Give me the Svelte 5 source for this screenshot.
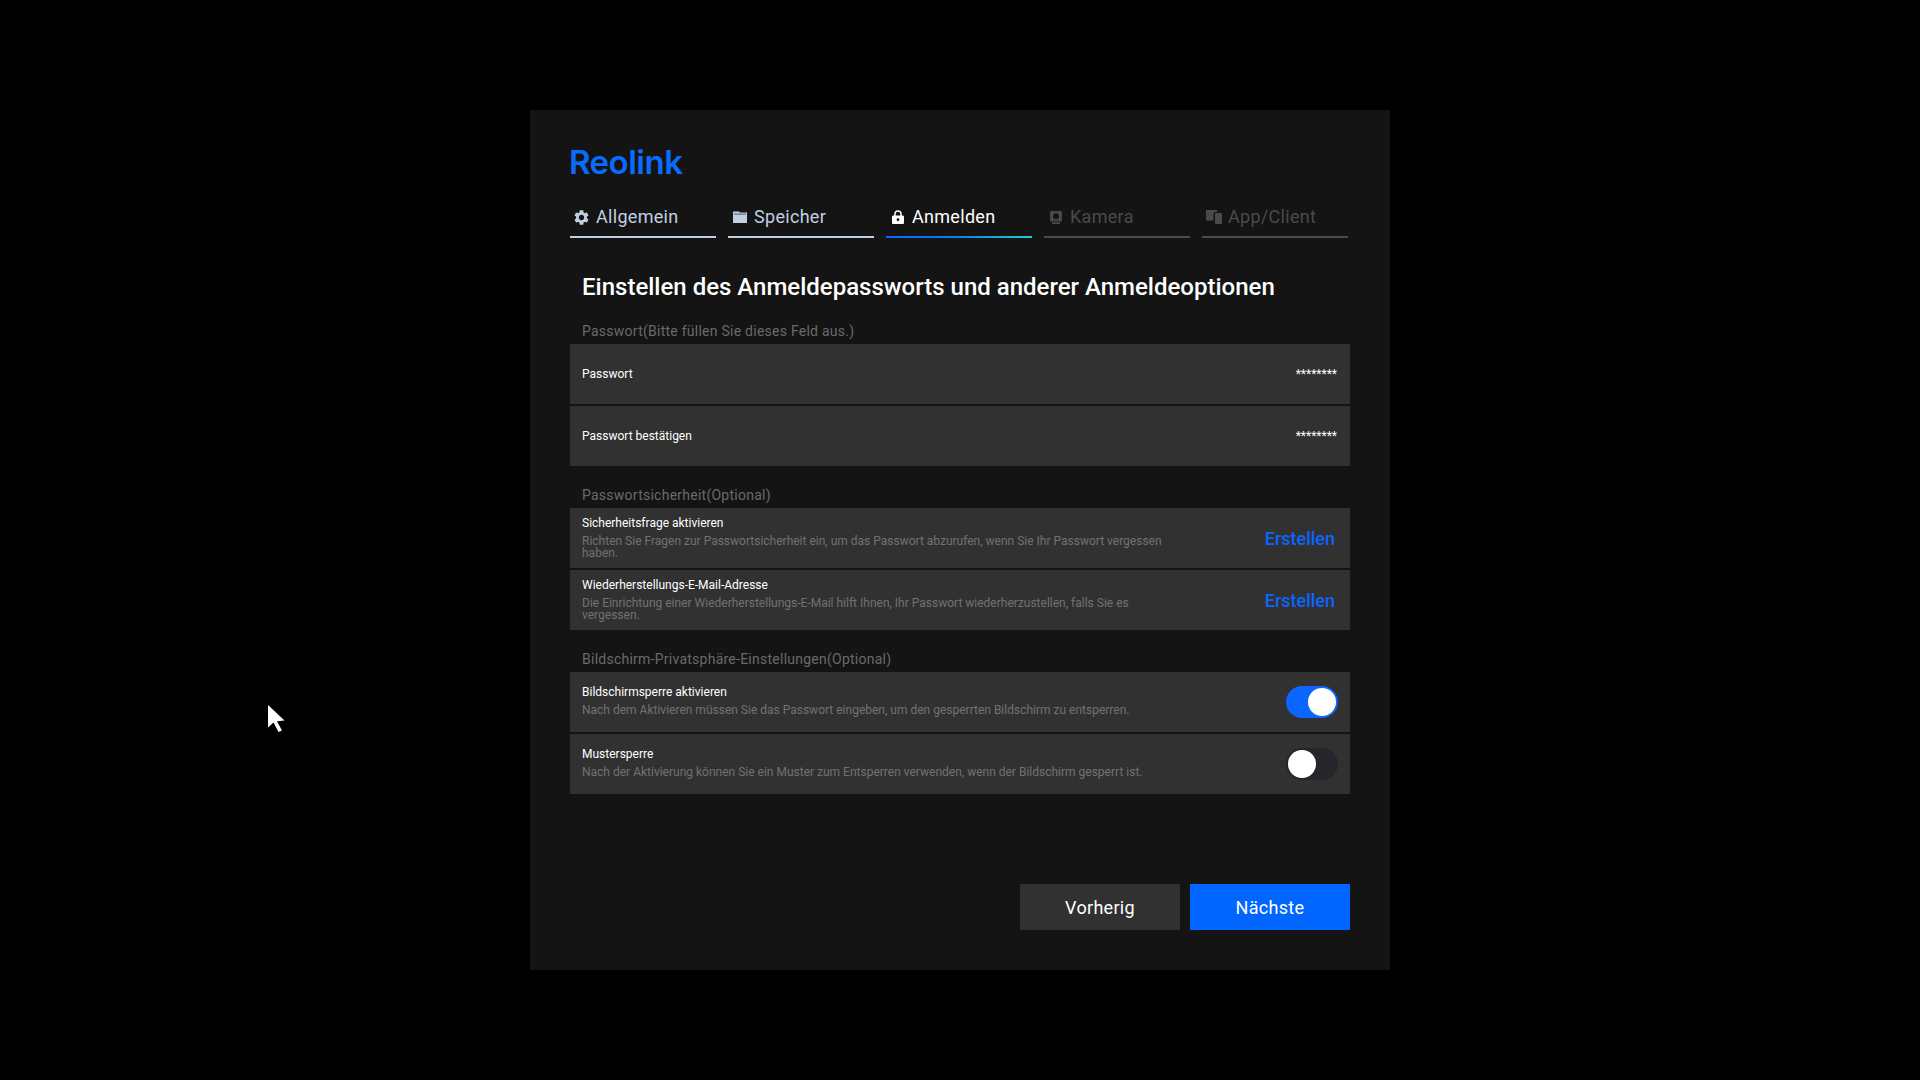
<script>
  const tabs = [
    { label: 'Allgemein', state: 'done', icon: 'gear' },
    { label: 'Speicher', state: 'done', icon: 'folder' },
    { label: 'Anmelden', state: 'active', icon: 'lock' },
    { label: 'Kamera', state: 'off', icon: 'camera' },
    { label: 'App/Client', state: 'off', icon: 'devices' }
  ];
  const security = [
    {
      title: 'Sicherheitsfrage aktivieren',
      desc: 'Richten Sie Fragen zur Passwortsicherheit ein, um das Passwort abzurufen, wenn Sie Ihr Passwort vergessen haben.'
    },
    {
      title: 'Wiederherstellungs-E-Mail-Adresse',
      desc: 'Die Einrichtung einer Wiederherstellungs-E-Mail hilft Ihnen, Ihr Passwort wiederherzustellen, falls Sie es vergessen.'
    }
  ];
  const privacy = [
    {
      title: 'Bildschirmsperre aktivieren',
      desc: 'Nach dem Aktivieren müssen Sie das Passwort eingeben, um den gesperrten Bildschirm zu entsperren.',
      on: true
    },
    {
      title: 'Mustersperre',
      desc: 'Nach der Aktivierung können Sie ein Muster zum Entsperren verwenden, wenn der Bildschirm gesperrt ist.',
      on: false
    }
  ];
</script>

<div class="page">
  <main class="dialog">
    <div class="logo">Reolink</div>

    <nav class="tabs">
      {#each tabs as tab}
        <div class="tab {tab.state}">
          <span class="ico">
            {#if tab.icon === 'gear'}
              <svg viewBox="2 2 20 20" width="15" height="15"><path fill="currentColor" d="M19.14 12.94c.04-.3.06-.61.06-.94 0-.32-.02-.64-.07-.94l2.03-1.58a.49.49 0 0 0 .12-.61l-1.92-3.32a.488.488 0 0 0-.59-.22l-2.39.96c-.5-.38-1.03-.7-1.62-.94l-.36-2.54a.484.484 0 0 0-.48-.41h-3.84c-.24 0-.43.17-.47.41l-.36 2.54c-.59.24-1.13.57-1.62.94l-2.39-.96c-.22-.08-.47 0-.59.22L2.74 8.87c-.12.21-.08.47.12.61l2.03 1.58c-.05.3-.09.63-.09.94s.02.64.07.94l-2.03 1.58a.49.49 0 0 0-.12.61l1.92 3.32c.12.22.37.29.59.22l2.39-.96c.5.38 1.03.7 1.62.94l.36 2.54c.05.24.24.41.48.41h3.84c.24 0 .44-.17.47-.41l.36-2.54c.59-.24 1.13-.56 1.62-.94l2.39.96c.22.08.47 0 .59-.22l1.92-3.32c.12-.22.07-.47-.12-.61l-2.01-1.58zM12 15.6c-1.98 0-3.6-1.62-3.6-3.6s1.62-3.6 3.6-3.6 3.6 1.62 3.6 3.6-1.62 3.6-3.6 3.6z"/></svg>
            {:else if tab.icon === 'folder'}
              <svg viewBox="0 0 14 12" width="14" height="12"><path fill="currentColor" d="M0 0.500h6l1 1h7v10.500H0z"/><path fill="#141414" opacity=".45" d="M1 2.400h12v1.400H1z"/></svg>
            {:else if tab.icon === 'lock'}
              <svg viewBox="0 0 12 14" width="12" height="14"><path fill="currentColor" d="M2.200 5.600V4a3.800 3.800 0 0 1 7.600 0v1.600h.9c.7 0 1.300.6 1.300 1.300v5.800c0 .7-.6 1.300-1.300 1.300H1.300C.6 14 0 13.400 0 12.700V6.900c0-.7.6-1.300 1.300-1.300zM3.700 5.600h4.600V4a2.300 2.300 0 0 0-4.600 0zM6 8.300a1.400 1.400 0 1 0 0 2.800 1.400 1.400 0 0 0 0-2.800z"/></svg>
            {:else if tab.icon === 'camera'}
              <svg viewBox="0 0 12 13" width="12" height="13"><path fill="currentColor" fill-rule="evenodd" d="M1.500 0h9A1.500 1.500 0 0 1 12 1.500v7.500a1.500 1.500 0 0 1-1.500 1.500h-9A1.500 1.500 0 0 1 0 9V1.500A1.500 1.500 0 0 1 1.500 0zM6 2.300a3 3 0 1 0 0 6 3 3 0 0 0 0-6z"/><path fill="currentColor" d="M2 11.300h8V13H2z"/></svg>
            {:else}
              <svg viewBox="0 0 16 14" width="16" height="14"><path fill="currentColor" d="M0 0h11v2H9.500C8.300 2 7.500 2.800 7.500 4v6.500H0z"/><path fill="currentColor" d="M10 3h5c.6 0 1 .4 1 1v9c0 .6-.4 1-1 1h-5c-.6 0-1-.4-1-1V4c0-.6.4-1 1-1z"/></svg>
            {/if}
          </span>
          <span class="tab-label">{tab.label}</span>
        </div>
      {/each}
    </nav>

    <h1>Einstellen des Anmeldepassworts und anderer Anmeldeoptionen</h1>

    <section>
      <h2>Passwort(Bitte füllen Sie dieses Feld aus.)</h2>
      <div class="row"><span class="title">Passwort</span><span class="stars">********</span></div>
      <div class="row"><span class="title">Passwort bestätigen</span><span class="stars">********</span></div>
    </section>

    <section>
      <h2>Passwortsicherheit(Optional)</h2>
      {#each security as item}
        <div class="row">
          <div class="text">
            <div class="title">{item.title}</div>
            <div class="desc">{item.desc}</div>
          </div>
          <span class="link">Erstellen</span>
        </div>
      {/each}
    </section>

    <section>
      <h2>Bildschirm-Privatsphäre-Einstellungen(Optional)</h2>
      {#each privacy as item}
        <div class="row">
          <div class="text single">
            <div class="title">{item.title}</div>
            <div class="desc">{item.desc}</div>
          </div>
          <span class="switch" class:on={item.on}><span class="knob"></span></span>
        </div>
      {/each}
    </section>

    <div class="actions">
      <button class="btn">Vorherig</button>
      <button class="btn primary">Nächste</button>
    </div>
  </main>

  <svg class="cursor" viewBox="0 0 17 27" width="17" height="27"><path fill="#fff" d="M0 0l16.500 15.500-7.500.8 5 9.200-3.500 1.500-5-9.500L0 22.500z"/></svg>
</div>

<style>
  :global(body) {
    margin: 0;
    background: #000;
  }
  .page {
    min-height: 100vh;
    display: flex;
    align-items: center;
    justify-content: center;
    position: relative;
    font-family: Roboto, "Liberation Sans", sans-serif;
  }
  .dialog {
    width: 860px;
    height: 860px;
    box-sizing: border-box;
    padding: 40px;
    background: #141414;
    color: #fff;
  }
  .logo {
    height: 24px;
    line-height: 24px;
    font-family: Inter, sans-serif;
    font-weight: 600;
    font-size: 33px;
    letter-spacing: -0.5px;
    margin-left: -1px;
    color: #0a6bff;
  }
  .tabs {
    display: flex;
    gap: 12px;
    margin-top: 28px;
  }
  .tab {
    width: 146px;
    height: 36px;
    box-sizing: border-box;
    border-bottom: 2px solid currentColor;
    display: flex;
    align-items: flex-start;
    font-size: 18px;
    line-height: 30px;
    letter-spacing: 0.3px;
    padding-left: 3px;
  }
  .ico {
    width: 23px;
    height: 30px;
    box-sizing: border-box;
    padding-right: 6px;
    flex: none;
    display: flex;
    align-items: center;
    justify-content: center;
  }
  .tab.done {
    color: #c3cfe2;
  }
  .tab.active {
    color: #fff;
    border-image: linear-gradient(90deg, #0a66ff 0%, #0a80f0 50%, #25d0c8 100%) 1;
  }
  .tab.off {
    color: #4a4a4a;
  }
  h1 {
    margin: 33px 0 18px;
    padding-left: 12px;
    font-size: 24px;
    line-height: 32px;
    font-weight: 500;
    color: #fff;
  }
  section {
    margin-bottom: 19px;
  }
  h2 {
    margin: 0 0 3px;
    padding-left: 12px;
    font-size: 14px;
    line-height: 20px;
    font-weight: 400;
    letter-spacing: 0.25px;
    color: #6a6a6a;
  }
  .row {
    height: 60px;
    box-sizing: border-box;
    padding: 0 12px;
    background: #313131;
    display: flex;
    align-items: center;
    justify-content: space-between;
    margin-bottom: 2px;
  }
  .row:last-child {
    margin-bottom: 0;
  }
  .title {
    font-size: 12px;
    line-height: 18px;
    color: #fff;
  }
  .stars {
    font-size: 12px;
    color: #fff;
    margin-right: 1px;
  }
  .text {
    width: 600px;
    padding-bottom: 4px;
  }
  .text.single {
    padding-bottom: 6px;
  }
  .desc {
    font-size: 12px;
    line-height: 12px;
    color: #717171;
    margin-top: 3px;
  }
  .link {
    font-size: 18px;
    font-weight: 500;
    color: #0a66ff;
    margin-right: 3px;
  }
  .switch {
    width: 52px;
    height: 32px;
    box-sizing: border-box;
    padding: 2px;
    border-radius: 16px;
    background: #24262b;
    display: flex;
  }
  .switch.on {
    background: #0a66ff;
    justify-content: flex-end;
  }
  .knob {
    width: 28px;
    height: 28px;
    border-radius: 50%;
    background: #fff;
  }
  .actions {
    display: flex;
    justify-content: flex-end;
    gap: 10px;
    margin-top: 90px;
  }
  .btn {
    width: 160px;
    height: 46px;
    border: 0;
    padding: 0;
    background: #313131;
    color: #fff;
    font-family: inherit;
    font-size: 18px;
    letter-spacing: 0.3px;
  }
  .btn.primary {
    background: #0066ff;
  }
  .cursor {
    position: absolute;
    left: 268px;
    top: 705px;
  }
</style>
